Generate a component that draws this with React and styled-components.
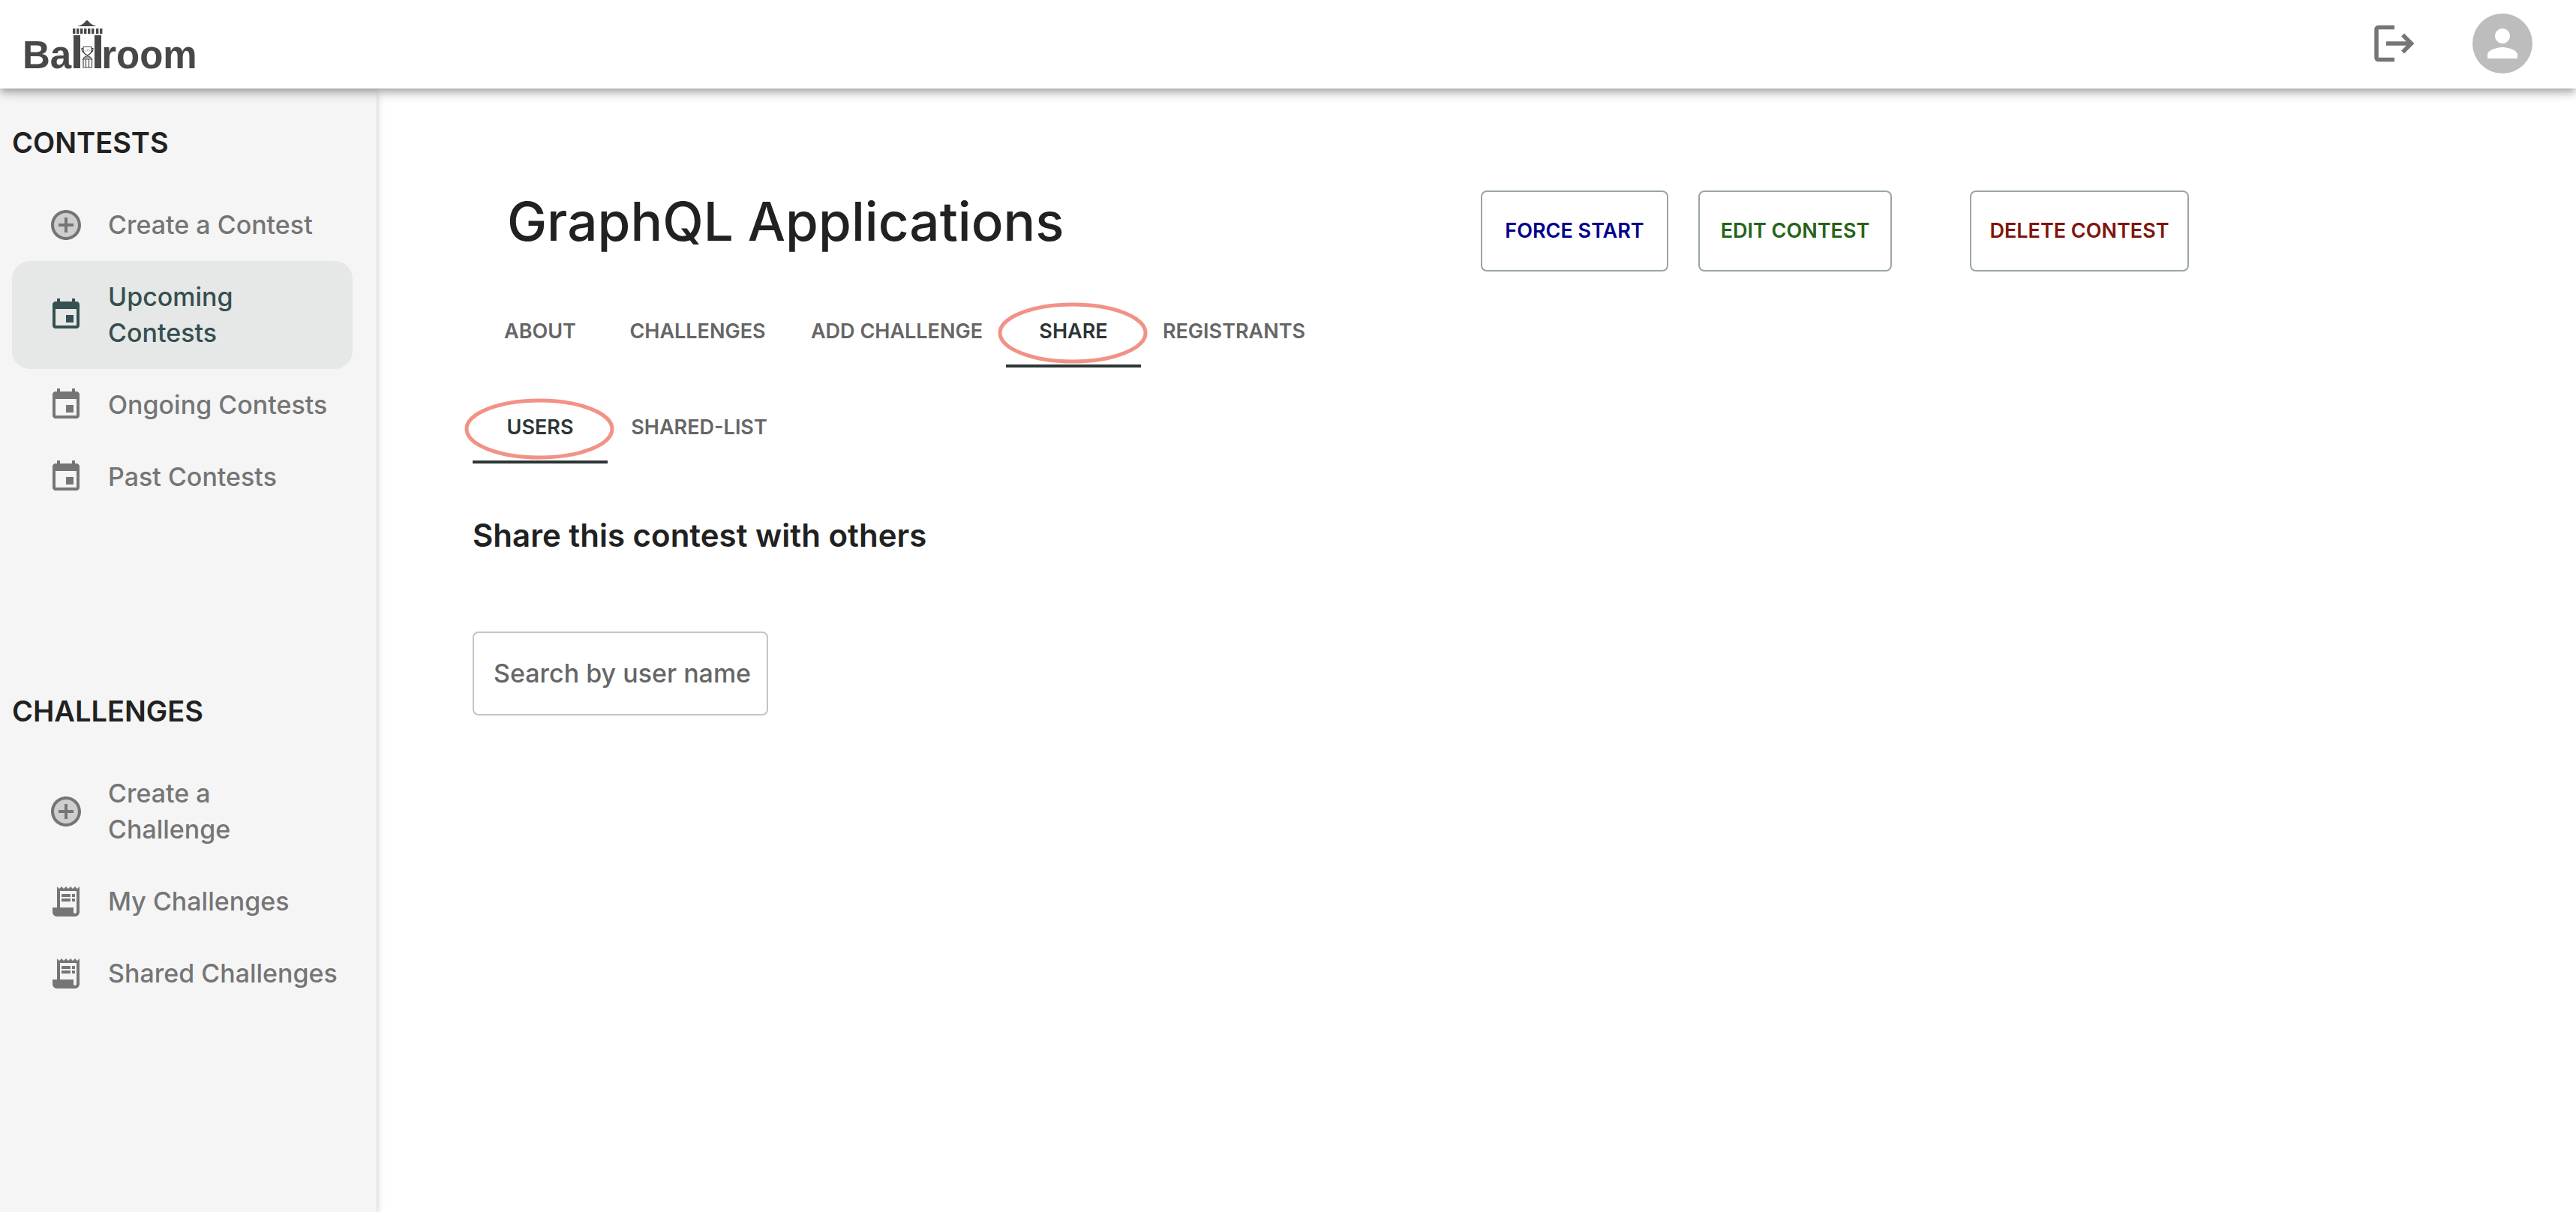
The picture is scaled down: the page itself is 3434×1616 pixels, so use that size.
import React, { useState } from "react";
import styled, { createGlobalStyle } from "styled-components";

const GlobalStyle = createGlobalStyle`
  *, *::before, *::after { box-sizing: border-box; }
  body {
    margin: 0;
    background: #fff;
    color: #212121;
    font-family: Inter, "Open Sans", sans-serif;
  }
  h1, h2, ul { margin: 0; padding: 0; }
`;

const Page = styled.div`
  display: flex;
  flex-direction: column;
  min-height: 100vh;
`;

const TopBar = styled.header`
  position: relative;
  z-index: 2;
  display: flex;
  align-items: center;
  justify-content: space-between;
  height: 118px;
  padding: 0 58px 2px 30px;
  background: #fff;
  box-shadow: 0 4px 8px -2px rgba(0, 0, 0, 0.2), 0 8px 10px rgba(0, 0, 0, 0.14),
    0 2px 20px rgba(0, 0, 0, 0.12);
`;

const Logo = styled.a`
  display: flex;
  align-items: flex-end;
  height: 68px;
  color: #484848;
  font: bold 51px/36px "Liberation Sans", Arial, sans-serif;
  text-decoration: none;
`;

const Tower = styled.svg`
  width: 40px;
  height: 66px;
  overflow: visible;
`;

const BarActions = styled.div`
  display: flex;
  align-items: center;
  gap: 64px;
`;

const IconButton = styled.button`
  display: flex;
  align-items: center;
  justify-content: center;
  padding: 0 12px;
  border: 0;
  background: none;
  color: #757575;
  cursor: pointer;
`;

const Avatar = styled.button`
  display: flex;
  align-items: center;
  justify-content: center;
  width: 80px;
  height: 80px;
  padding: 0;
  border: 0;
  border-radius: 50%;
  background: #bdbdbd;
  color: #fff;
  cursor: pointer;
`;

const Body = styled.div`
  display: flex;
  flex: 1;
`;

const Sidebar = styled.nav`
  z-index: 1;
  display: flex;
  flex-direction: column;
  gap: 234px;
  flex: 0 0 502px;
  padding: 42px 32px 42px 16px;
  background: #f5f5f5;
  box-shadow: 0 4px 8px -2px rgba(0, 0, 0, 0.2), 0 4px 12px rgba(0, 0, 0, 0.14);
`;

const SectionTitle = styled.h2`
  margin-bottom: 32px;
  font-size: 38px;
  font-weight: 600;
  line-height: 60px;
`;

const NavList = styled.ul`
  list-style: none;
`;

const NavItem = styled.a`
  display: flex;
  align-items: center;
  gap: 32px;
  padding: 24px 16px 24px 48px;
  border-radius: 24px;
  background: ${(p) => (p.$active ? "#e5e8e7" : "transparent")};
  color: ${(p) => (p.$active ? "#364f50" : "#757575")};
  font-size: 34px;
  font-weight: 500;
  line-height: 48px;
  text-decoration: none;
  white-space: pre-line;
`;

const Main = styled.main`
  display: flex;
  flex: 1;
  flex-direction: column;
  align-items: flex-start;
  min-width: 0;
  padding: 136px 128px 64px;
`;

const TitleRow = styled.div`
  display: flex;
  align-items: flex-start;
  justify-content: space-between;
  width: 100%;
  max-width: 2288px;
  padding-left: 46px;
`;

const Title = styled.h1`
  font-size: 71px;
  font-weight: 500;
  line-height: 82px;
`;

const Actions = styled.div`
  display: flex;
  gap: 40px;
`;

const ActionButton = styled.button`
  min-width: ${(p) => p.$width}px;
  height: 108px;
  margin-left: ${(p) => (p.$apart ? 64 : 0)}px;
  padding: 0 24px;
  border: 2px solid #9aa6a5;
  border-radius: 8px;
  background: transparent;
  color: ${(p) => p.$color};
  font: 600 27px/48px Inter, sans-serif;
  white-space: nowrap;
  cursor: pointer;
`;

const TabList = styled.div`
  display: flex;
  margin-top: 32px;
`;

const TabButton = styled.button`
  position: relative;
  width: ${(p) => p.$width}px;
  height: 96px;
  padding: 4px 0 0;
  border: 0;
  border-bottom: 4px solid ${(p) => (p.$active ? "#2c3535" : "transparent")};
  background: none;
  color: ${(p) => (p.$active ? "#2c3535" : "#666")};
  font: 600 27px/48px Inter, sans-serif;
  white-space: nowrap;
  cursor: pointer;
`;

const Ring = styled.svg`
  position: absolute;
  top: 8px;
  left: -12px;
  width: 202px;
  height: 84px;
  overflow: visible;
  pointer-events: none;
`;

const ShareHeading = styled.h2`
  margin-top: 66px;
  font-size: 42px;
  font-weight: 600;
  line-height: 60px;
`;

const SearchInput = styled.input`
  width: 394px;
  height: 112px;
  margin-top: 98px;
  padding: 0 0 2px 26px;
  border: 2px solid #c4c4c4;
  border-radius: 8px;
  background: transparent;
  color: #212121;
  font: 500 34px/48px Inter, sans-serif;
  &::placeholder { color: #666; opacity: 1; }
`;

const GLYPHS = {
  add: (
    <>
      <circle cx="12" cy="12" r="9" opacity=".3" />
      <path d="M13 7h-2v4H7v2h4v4h2v-4h4v-2h-4V7zm-1-5C6.48 2 2 6.48 2 12s4.48 10 10 10 10-4.48 10-10S17.52 2 12 2zm0 18c-4.41 0-8-3.59-8-8s3.59-8 8-8 8 3.59 8 8-3.59 8-8 8z" />
    </>
  ),
  event: (
    <path d="M17 12h-5v5h5v-5zM16 1v2H8V1H6v2H5c-1.11 0-1.99.9-1.99 2L3 19c0 1.1.89 2 2 2h14c1.1 0 2-.9 2-2V5c0-1.1-.9-2-2-2h-1V1h-2zm3 18H5V8h14v11z" />
  ),
  receipt: (
    <path d="M19.5 3.5L18 2l-1.5 1.5L15 2l-1.5 1.5L12 2l-1.5 1.5L9 2 7.5 3.5 6 2v14H3v3c0 1.66 1.34 3 3 3h12c1.66 0 3-1.34 3-3V2l-1.5 1.5zM19 19c0 .55-.45 1-1 1s-1-.45-1-1v-3H8V5h11v14zM9 7h6v2H9zM16 7h2v2h-2zM9 10h6v2H9zM16 10h2v2h-2z" />
  ),
  person: (
    <path d="M12 12c2.21 0 4-1.79 4-4s-1.79-4-4-4-4 1.79-4 4 1.79 4 4 4zm0 2c-2.67 0-8 1.34-8 4v2h16v-2c0-2.66-5.33-4-8-4z" />
  ),
};

function Glyph({ name, size = 48 }) {
  return (
    <svg width={size} height={size} viewBox="0 0 24 24" fill="currentColor" aria-hidden="true">
      {GLYPHS[name]}
    </svg>
  );
}

const SECTIONS = [
  {
    title: "CONTESTS",
    items: [
      { icon: "add", label: "Create a Contest" },
      { icon: "event", label: "Upcoming\nContests", active: true },
      { icon: "event", label: "Ongoing Contests" },
      { icon: "event", label: "Past Contests" },
    ],
  },
  {
    title: "CHALLENGES",
    items: [
      { icon: "add", label: "Create a\nChallenge" },
      { icon: "receipt", label: "My Challenges" },
      { icon: "receipt", label: "Shared Challenges" },
    ],
  },
];

const CONTEST_TABS = [
  { label: "ABOUT", width: 180 },
  { label: "CHALLENGES", width: 240 },
  { label: "ADD CHALLENGE", width: 291 },
  { label: "SHARE", width: 180, active: true },
  { label: "REGISTRANTS", width: 248 },
];

const SHARE_TABS = [
  { label: "USERS", width: 180, active: true },
  { label: "SHARED-LIST", width: 244 },
];

function Tabs({ tabs }) {
  return (
    <TabList role="tablist">
      {tabs.map((t) => (
        <TabButton key={t.label} role="tab" aria-selected={!!t.active} $active={t.active} $width={t.width}>
          {t.label}
          {t.active && (
            <Ring viewBox="0 0 202 84" aria-hidden="true">
              <ellipse cx="101" cy="42" rx="97" ry="38" fill="none" stroke="#f29286" strokeWidth="5" />
            </Ring>
          )}
        </TabButton>
      ))}
    </TabList>
  );
}

function BallroomLogo() {
  return (
    <Logo href="#" aria-label="Ballroom">
      <span>Ba</span>
      <Tower viewBox="95 26 40 66" fill="#484848" aria-hidden="true">
        <path d="M116 27l1.500 .8c2.500 3.600 6 6 11 7.200h-25c5-1.200 8.500-3.600 11-7.200z" />
        {[97, 102, 107, 112, 117, 122, 128, 133].map((x) => (
          <rect key={x} x={x} y="38" width="3.400" height="7" />
        ))}
        <rect x="98" y="47" width="9" height="44" />
        <rect x="126" y="47" width="9" height="44" />
        <g fill="none" stroke="#484848" strokeWidth="1.200">
          <path d="M111 62.500h11v4c0 4-3 7-5.500 7s-5.500-3-5.500-7zM111 64.500h-2c0 4 1 5 3 6M122 64.500h2c0 4-1 5-3 6M116.500 73.500v1.500M112 77c1-1.500 2-2 4.500-2s3.500.5 4.500 2" />
          <path d="M114.500 66l-1 1.500 1 1M118.500 66l1 1.500-1 1M117 65.500l-1 3" strokeWidth=".5" />
          <path d="M110.500 79l1.500-2h9l1.500 2zM111 79v11h11.500V79M114.500 79v11M118.500 79v11" />
        </g>
      </Tower>
      <span>room</span>
    </Logo>
  );
}

export default function App() {
  const [query, setQuery] = useState("");
  return (
    <Page>
      <GlobalStyle />
      <TopBar>
        <BallroomLogo />
        <BarActions>
          <IconButton aria-label="Log out">
            <svg width="56" height="50" viewBox="0 0 56 50" fill="none" stroke="currentColor" aria-hidden="true">
              <path d="M28 3.500H7c-2 0-3 1-3 3v37c0 2 1 3 3 3h21" strokeWidth="5.500" />
              <path d="M17 25h34M39 13.500L50.500 25 39 36.500" strokeWidth="5.500" />
            </svg>
          </IconButton>
          <Avatar aria-label="Account">
            <Glyph name="person" size={60} />
          </Avatar>
        </BarActions>
      </TopBar>
      <Body>
        <Sidebar>
          {SECTIONS.map((s) => (
            <section key={s.title}>
              <SectionTitle>{s.title}</SectionTitle>
              <NavList>
                {s.items.map((it) => (
                  <li key={it.label}>
                    <NavItem href="#" $active={it.active}>
                      <Glyph name={it.icon} />
                      <span>{it.label}</span>
                    </NavItem>
                  </li>
                ))}
              </NavList>
            </section>
          ))}
        </Sidebar>
        <Main>
          <TitleRow>
            <Title>GraphQL Applications</Title>
            <Actions>
              <ActionButton $width={250} $color="#00008b">FORCE START</ActionButton>
              <ActionButton $width={258} $color="#266317">EDIT CONTEST</ActionButton>
              <ActionButton $width={292} $color="#7f150e" $apart>DELETE CONTEST</ActionButton>
            </Actions>
          </TitleRow>
          <Tabs tabs={CONTEST_TABS} />
          <Tabs tabs={SHARE_TABS} />
          <ShareHeading>Share this contest with others</ShareHeading>
          <SearchInput
            type="text"
            aria-label="Search by user name"
            placeholder="Search by user name"
            value={query}
            onChange={(e) => setQuery(e.target.value)}
          />
        </Main>
      </Body>
    </Page>
  );
}
